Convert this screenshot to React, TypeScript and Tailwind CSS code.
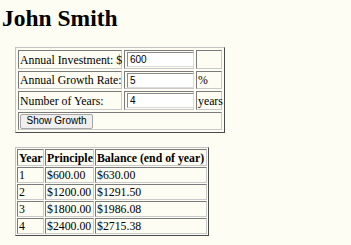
import React from "react";

const cell =
  "border border-t-[#7a7a7a] border-l-[#7a7a7a] border-r-[#c9c9c9] border-b-[#c9c9c9] px-[1px] py-0 align-middle leading-[14px] whitespace-nowrap";

export default function App() {
  const rows = [
    ["1", "$600.00", "$630.00"],
    ["2", "$1200.00", "$1291.50"],
    ["3", "$1800.00", "$1986.08"],
    ["4", "$2400.00", "$2715.38"],
  ];
  const input =
    "block ml-[1px] w-[67px] h-[15px] px-[2px] text-[10px] leading-none bg-white border border-t-[#8a8a8a] border-l-[#8a8a8a] border-r-[#dcdcdc] border-b-[#dcdcdc] font-['Liberation_Sans',sans-serif] text-black";
  const outer =
    "border-separate border border-t-[#c4c4c4] border-l-[#c4c4c4] border-r-[#4a4a4a] border-b-[#4a4a4a] table-fixed";
  return (
    <div className="w-[351px] h-[245px] bg-[#fdfdf3] text-black font-['Liberation_Serif',serif] text-[11.8px] overflow-hidden">
      <h1 className="pl-[2px] pt-[7px] text-[23.5px] font-bold leading-[23.5px]">John Smith</h1>
      <div className="pl-[15px] pt-[16.5px]">
        <table className={outer + " border-spacing-[2px] w-[210px]"}>
          <tbody>
            <tr className="h-[19px]">
              <td className={cell + " w-[104px]"}>Annual Investment: $</td>
              <td className={cell + " w-[70px] p-0"}>
                <input className={input} defaultValue="600" />
              </td>
              <td className={cell + " w-[26px]"}></td>
            </tr>
            <tr className="h-[18px]">
              <td className={cell}>Annual Growth Rate:</td>
              <td className={cell + " p-0"}>
                <input className={input} defaultValue="5" />
              </td>
              <td className={cell}>%</td>
            </tr>
            <tr className="h-[19px]">
              <td className={cell}>Number of Years:</td>
              <td className={cell + " p-0"}>
                <input className={input} defaultValue="4" />
              </td>
              <td className={cell + " overflow-visible"}>years</td>
            </tr>
            <tr className="h-[18px]">
              <td className={cell} colSpan={3}>
                <button className="block h-[15px] w-[73px] text-[10px] leading-none bg-[#efefef] border border-[#a6a6a6] rounded-[2px] font-['Liberation_Sans',sans-serif] text-black">
                  Show Growth
                </button>
              </td>
            </tr>
          </tbody>
        </table>
        <table className={outer + " mt-[14px] border-spacing-[1px] w-[194px]"}>
          <tbody>
            <tr className="h-[17px]">
              <th className={cell + " w-[27px] font-bold text-left"}>Year</th>
              <th className={cell + " w-[49px] font-bold text-left"}>Principle</th>
              <th className={cell + " w-[112px] font-bold text-left"}>Balance (end of year)</th>
            </tr>
            {rows.map((r) => (
              <tr key={r[0]} className="h-[16px]">
                <td className={cell}>{r[0]}</td>
                <td className={cell}>{r[1]}</td>
                <td className={cell}>{r[2]}</td>
              </tr>
            ))}
          </tbody>
        </table>
      </div>
    </div>
  );
}
